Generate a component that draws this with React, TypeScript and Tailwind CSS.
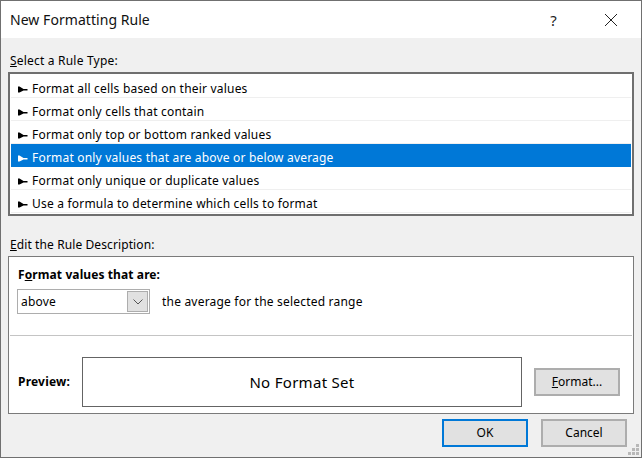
import React from 'react';

const rules = [
  'Format all cells based on their values',
  'Format only cells that contain',
  'Format only top or bottom ranked values',
  'Format only values that are above or below average',
  'Format only unique or duplicate values',
  'Use a formula to determine which cells to format',
];

function Arrow({ color }: { color: string }) {
  return (
    <svg width="10" height="7" viewBox="0 0 10 7" className="shrink-0">
      <path d="M0 0.5 L0 6.5 L1.5 6.5 L5.5 4.5 L9.5 4.5 L9.5 3 L5.5 3 L1.5 0.5 Z" fill={color} />
    </svg>
  );
}

function RuleRow({ text, selected }: { text: string; selected: boolean }) {
  return (
    <div
      className={`h-[23px] flex items-center pl-[7px] pt-[6px] gap-[4px] border-b ${
        selected ? 'bg-[#0078d7] text-white border-[#0078d7]' : 'text-black border-[#efefef]'
      }`}
    >
      <Arrow color={selected ? '#ffffff' : '#000000'} />
      <span>{text}</span>
    </div>
  );
}

export default function App() {
  return (
    <div className="relative w-[642px] h-[458px] bg-[#f0f0f0] border border-[#707070] overflow-hidden font-['Noto_Sans',sans-serif] text-[12px] leading-[16px] tracking-[0.2px] text-black">
      <div className="h-[37px] bg-white flex items-center pl-[9px] pr-[23px]">
        <span className="text-[14px] leading-[20px] tracking-[0.05px] text-[#111]">New Formatting Rule</span>
        <span className="ml-auto mr-[47px] text-[15px] leading-[20px] text-[#222]">?</span>
        <svg width="14" height="14" viewBox="0 0 14 14">
          <path d="M1 1 L13 13 M13 1 L1 13" stroke="#222" strokeWidth="1" fill="none" />
        </svg>
      </div>

      <div className="px-[7px]">
        <div className="pt-[15px] pl-[2px] h-[34px]">
          <span><span className="underline">S</span>elect a Rule Type:</span>
        </div>
        <div className="h-[144px] w-[626px] border-2 border-[#6f6f6f] bg-white p-px">
          {rules.map((r, i) => (
            <RuleRow key={r} text={r} selected={i === 3} />
          ))}
        </div>

        <div className="h-[40px] pl-[2px] pt-[21px] tracking-[0.1px]">
          <span><span className="underline">E</span>dit the Rule Description:</span>
        </div>

        <div className="w-[626px] h-[158px] border border-[#7a7a7a] bg-white flex flex-col">
          <div className="h-[79px] border-b border-[#c4c4c4] mx-px px-[7px] pt-[10px]">
            <div className="font-bold h-[16px] pl-px tracking-[0.1px]">
              F<span className="underline">o</span>rmat values that are:
            </div>
            <div className="flex items-center mt-[6px]">
              <div className="w-[133px] h-[25px] border border-[#adadad] flex items-center pl-[3px] pr-px">
                <span className="flex-1">above</span>
                <div className="w-[21px] h-[21px] bg-[#e1e1e1] border border-[#adadad] flex items-center justify-center">
                  <svg width="10" height="6" viewBox="0 0 10 6">
                    <path d="M0.5 0.5 L5 5 L9.5 0.5" stroke="#555" strokeWidth="1" fill="none" />
                  </svg>
                </div>
              </div>
              <span className="ml-[12px] pt-px">the average for the selected range</span>
            </div>
          </div>
          <div className="flex-1 pl-[9px] pt-[21px]">
            <div className="flex items-center">
              <span className="font-bold w-[64px]">Preview:</span>
              <div className="w-[440px] h-[50px] border border-[#646464] flex items-center justify-center text-[15px] tracking-[0.3px]">
                No Format Set
              </div>
              <button className="ml-[12px] w-[86px] h-[28px] bg-[#e1e1e1] border-2 border-[#adadad] flex items-center justify-center tracking-normal">
                <span><span className="underline">F</span>ormat...</span>
              </button>
            </div>
          </div>
        </div>

        <div className="flex justify-end pr-[7px] pt-[5px] gap-[13px]">
          <button className="w-[86px] h-[28px] bg-[#e1e1e1] border-2 border-[#0078d7] flex items-center justify-center tracking-normal">OK</button>
          <button className="w-[86px] h-[28px] bg-[#e1e1e1] border-2 border-[#adadad] flex items-center justify-center tracking-normal">Cancel</button>
        </div>
      </div>

      <svg width="12" height="12" viewBox="0 0 12 12" className="absolute right-[1px] bottom-[1px]">
        <path d="M8 0h3v3H8zM4 4h3v3H4zM8 4h3v3H8zM0 8h3v3H0zM4 8h3v3H4zM8 8h3v3H8z" fill="#b8b8b8" />
      </svg>
    </div>
  );
}
